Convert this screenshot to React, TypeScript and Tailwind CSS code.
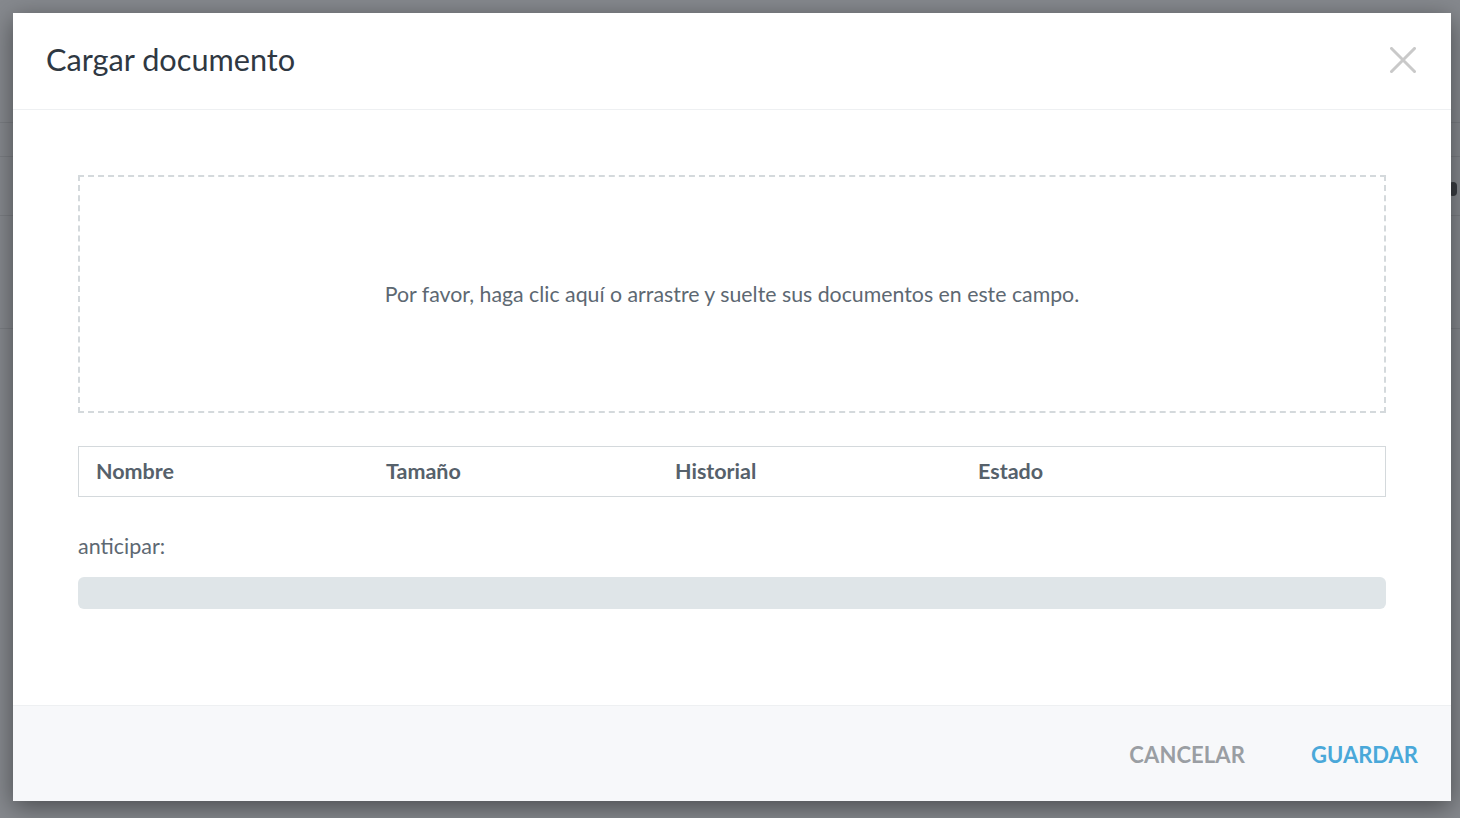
import React from "react";

export default function App() {
  const font = { fontFamily: "Lato, 'Noto Sans', sans-serif" };
  return (
    <div className="relative h-[818px] w-[1460px] overflow-hidden bg-[#86898e]" style={font}>
      {/* background page rows (behind overlay) */}
      <div className="flex flex-col">
        <div className="h-[123px] border-b border-[#7b7e83]" />
        <div className="h-[34px] border-b border-[#7b7e83]" />
        <div className="h-[59px] border-b border-[#7b7e83]" />
        <div className="h-[113px] border-b border-[#7b7e83]" />
      </div>
      <div className="absolute left-[1449px] top-[182px] h-[14px] w-[8px] rounded-full bg-[#3a3d42]" />

      {/* modal */}
      <div className="absolute left-[13px] top-[13px] flex h-[788px] w-[1438px] flex-col bg-white shadow-[0_6px_24px_rgba(0,0,0,0.45)]">
        <div className="flex h-[97px] shrink-0 items-center justify-between border-b border-[#eef0f2] pl-[33px] pr-[35px]">
          <h1 className="pb-[1px] text-[30.7px] font-normal text-[#2f3842]">Cargar documento</h1>
          <svg width="26" height="26" viewBox="0 0 26 26" className="mb-[2px]">
            <path d="M1.5 1.5 L24.5 24.5 M24.5 1.5 L1.5 24.5" stroke="#c9c9c9" strokeWidth="3" strokeLinecap="square" />
          </svg>
        </div>

        <div className="flex flex-1 flex-col px-[65px] pt-[65px]">
          <div className="flex h-[238px] items-center justify-center border-2 border-dashed border-[#d4d9dc]">
            <p className="text-[21.3px] leading-[30px] text-[#5d6872]">
              Por favor, haga clic aquí o arrastre y suelte sus documentos en este campo.
            </p>
          </div>

          <div className="mt-[33px] flex h-[51px] items-center border border-[#d4d9dc] text-[21.5px] font-bold text-[#56616b]">
            <div className="w-[290px] pl-[17px]">Nombre</div>
            <div className="w-[289px] pl-[17px]">Tamaño</div>
            <div className="w-[303px] pl-[17px]">Historial</div>
            <div className="flex-1 pl-[17px]">Estado</div>
          </div>

          <div className="mt-[34px] text-[21.5px] leading-[30px] text-[#5d6872]">anticipar:</div>

          <div className="mt-[16px] h-[32px] rounded-[6px] bg-[#dfe5e8]" />
        </div>

        <div className="flex h-[96px] shrink-0 items-center justify-end gap-[66px] border-t border-[#eef0f2] bg-[#f7f8fa] pr-[33px] pt-[2px]">
          <button className="text-[22px] font-bold tracking-[0.1px] text-[#9a9ea3]">CANCELAR</button>
          <button className="text-[22px] font-bold tracking-[0px] text-[#4aa8d9]">GUARDAR</button>
        </div>
      </div>
    </div>
  );
}
